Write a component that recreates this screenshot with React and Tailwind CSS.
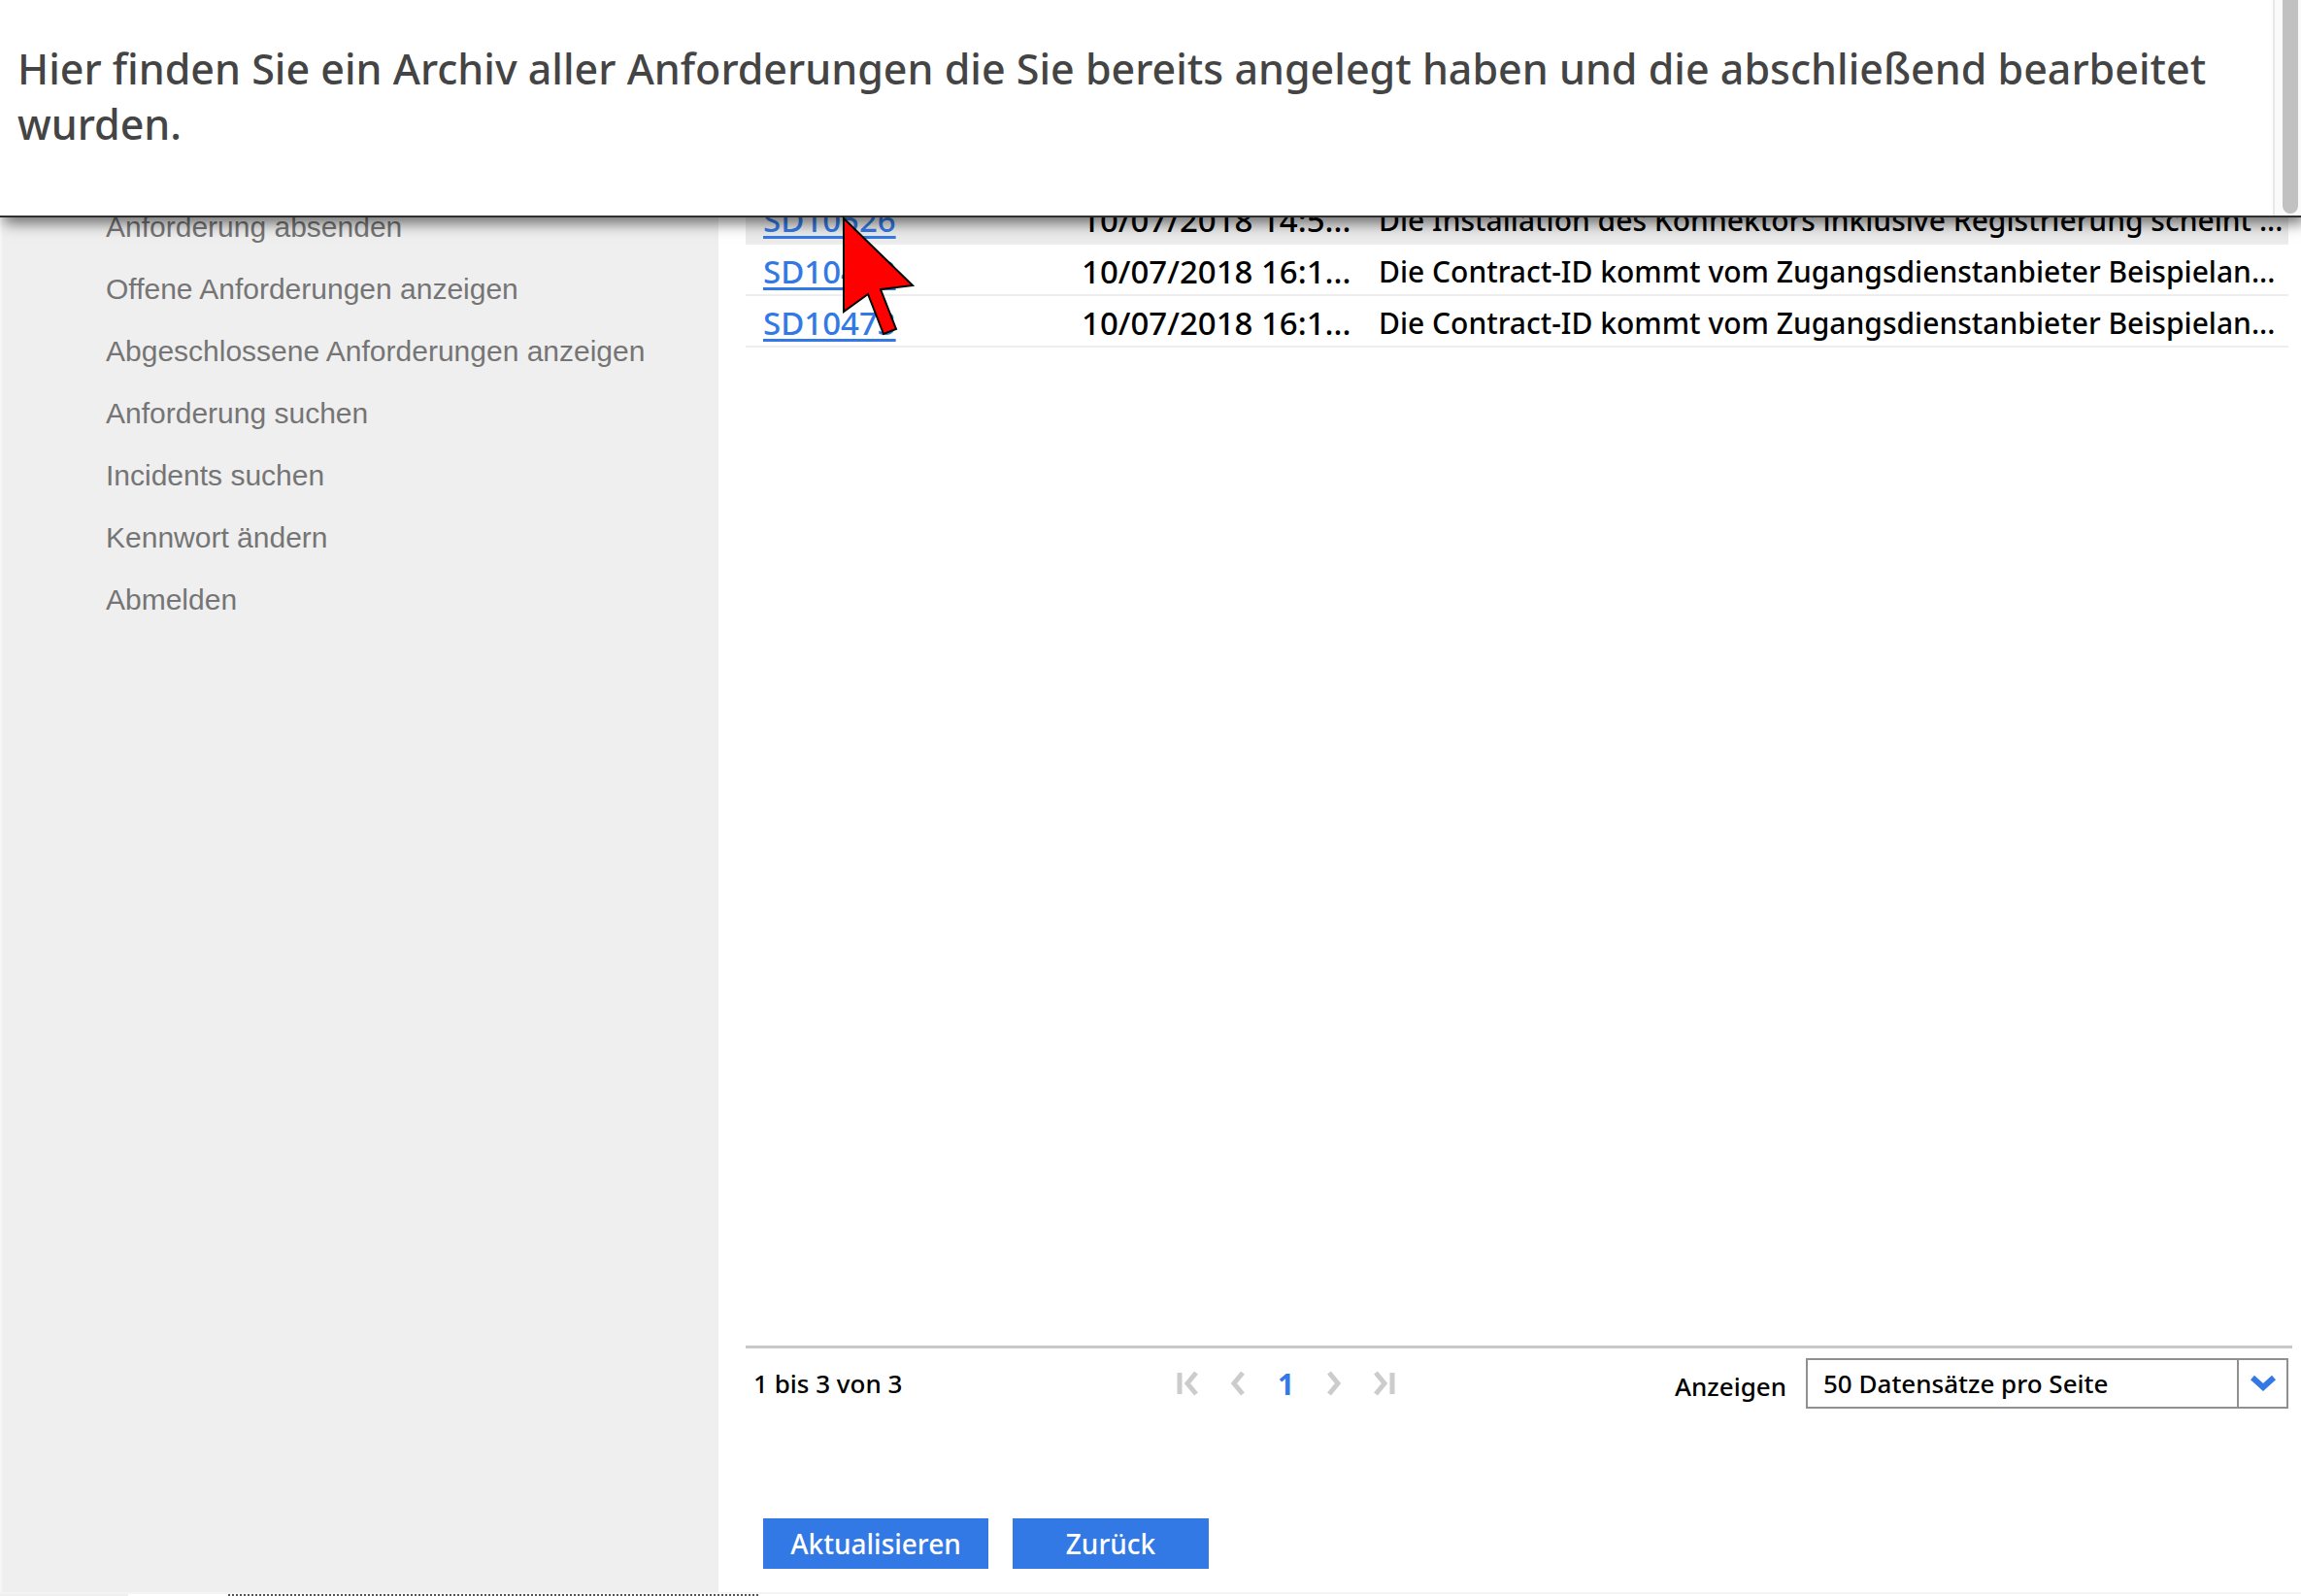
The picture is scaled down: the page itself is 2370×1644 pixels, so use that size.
const nav = [
  'Anforderung absenden',
  'Offene Anforderungen anzeigen',
  'Abgeschlossene Anforderungen anzeigen',
  'Anforderung suchen',
  'Incidents suchen',
  'Kennwort ändern',
  'Abmelden',
];

const rows = [
  ['SD10526', '10/07/2018 14:5...', 'Die Installation des Konnektors inklusive Registrierung scheint ...'],
  ['SD10472', '10/07/2018 16:1...', 'Die Contract-ID kommt vom Zugangsdienstanbieter Beispielan...'],
  ['SD10473', '10/07/2018 16:1...', 'Die Contract-ID kommt vom Zugangsdienstanbieter Beispielan...'],
];

function Banner() {
  return (
    <header className="relative z-10 flex h-[224px] shrink-0 border-b-2 border-[#303030] bg-white shadow-[4px_6px_14px_rgba(0,0,0,0.55)]">
      <p className="grow pt-[42px] pl-[18px] font-['Noto_Sans'] text-[43px] leading-[57px] font-medium text-[#444]">
        Hier finden Sie ein Archiv aller Anforderungen die Sie bereits angelegt haben und die abschließend bearbeitet wurden.
      </p>
      <div className="flex w-[29px] shrink-0 justify-center border-l-2 border-[#e8e8e8] bg-[#fafafa] pb-0.5 pl-[5px]">
        <div className="w-4 rounded-b-full bg-[#c1c1c1]" />
      </div>
    </header>
  );
}

function Pointer() {
  return (
    <svg className="absolute top-[222px] left-[866px] z-20" width="78" height="124" viewBox="0 0 78 124" aria-hidden="true">
      <path d="M3 3 L74 72 L41 76 L57 117 L44 122 L28 81 L3 99 Z" fill="#f00" stroke="#000" strokeWidth="2" />
    </svg>
  );
}

function PageIcon({ label, d }) {
  return (
    <button type="button" aria-label={label} className="text-[#ccc]">
      <svg width="24" height="26" viewBox="0 0 24 26" fill="none" stroke="currentColor" strokeWidth="5" aria-hidden="true">
        <path d={d} />
      </svg>
    </button>
  );
}

export default function App() {
  return (
    <div className="relative flex h-screen flex-col overflow-hidden bg-white font-['Noto_Sans',sans-serif]">
      <Banner />
      <Pointer />
      <div className="flex min-h-0 grow">
        <nav className="w-[740px] shrink-0 border-l-2 border-[#f6f6f6] bg-[#efefef] pl-[107px] font-['Liberation_Sans',sans-serif] text-[30px] leading-9 text-[#757575]">
          <ul className="-mt-2 flex flex-col gap-7">
            {nav.map((n) => (
              <li key={n}><a href="#">{n}</a></li>
            ))}
          </ul>
        </nav>
        <main className="flex min-w-0 grow flex-col pr-[9px] pl-7">
          <div className="-mt-[25px] pr-1">
            <table className="w-full table-fixed text-[33px] leading-[47px] font-medium text-black">
              <colgroup>
                <col className="w-[328px]" />
                <col className="w-[306px]" />
                <col />
              </colgroup>
              <tbody>
                {rows.map(([id, date, text]) => (
                  <tr key={id} className="border-b-2 border-[#eee] first:bg-[#ebebeb]">
                    <td className="p-0 pt-1 pl-[18px]">
                      <a href="#" className="text-[#3379e6] underline decoration-[3px] underline-offset-4">{id}</a>
                    </td>
                    <td className="p-0 pt-1 pl-[18px] whitespace-nowrap">{date}</td>
                    <td className="p-0 pt-1 pl-[18px] text-[30px] whitespace-nowrap">{text}</td>
                  </tr>
                ))}
              </tbody>
            </table>
          </div>
          <div className="mt-auto flex h-[81px] shrink-0 items-center justify-between border-t-[3px] border-[#c8c8c8] pr-1 pb-1.5 pl-2 text-[26px] font-medium">
            <span className="w-[436px]">1 bis 3 von 3</span>
            <div className="flex grow items-center gap-7">
              <PageIcon label="Erste Seite" d="M3 2V24M20 2L11 13L20 24" />
              <PageIcon label="Vorherige Seite" d="M16 2L7 13L16 24" />
              <span className="text-[30px] font-bold text-[#3379e6]">1</span>
              <PageIcon label="Nächste Seite" d="M8 2L17 13L8 24" />
              <PageIcon label="Letzte Seite" d="M4 2L13 13L4 24M21 2V24" />
            </div>
            <label htmlFor="size" className="mr-5 pt-1.5">Anzeigen</label>
            <div className="relative flex h-[52px] w-[497px]">
              <select id="size" className="grow appearance-none border-2 border-[#909090] pl-4">
                <option>50 Datensätze pro Seite</option>
              </select>
              <div className="pointer-events-none absolute inset-y-0 right-0 flex w-[53px] items-center justify-center border-2 border-[#909090]">
                <svg width="28" height="18" viewBox="0 0 28 18" fill="none" stroke="#3379e6" strokeWidth="6" aria-hidden="true">
                  <path d="M3 3L14 13L25 3" />
                </svg>
              </div>
            </div>
          </div>
          <div className="mt-[97px] mb-6 ml-[18px] flex gap-[25px] text-[28px] font-medium text-white">
            <button type="button" className="h-[52px] w-[232px] bg-[#3379e6]">Aktualisieren</button>
            <button type="button" className="h-[52px] w-[202px] bg-[#3379e6]">Zurück</button>
          </div>
        </main>
      </div>
      <footer className="flex h-1 shrink-0 items-end border-t-2 border-[#f4f4f4] bg-white">
        <div className="h-0.5 w-[132px] bg-[#efefef]" />
        <div className="ml-[103px] w-[546px] border-t-2 border-dotted border-[#555]" />
      </footer>
    </div>
  );
}
